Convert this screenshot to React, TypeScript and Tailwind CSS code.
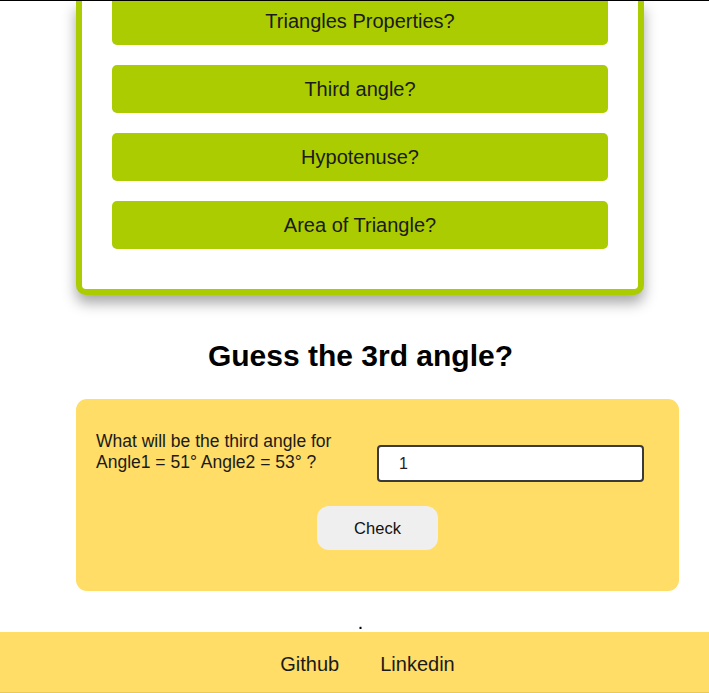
import React from 'react';

const topics = ['Triangles Properties?', 'Third angle?', 'Hypotenuse?', 'Area of Triangle?'];

export default function App() {
  return (
    <div className="min-h-[693px] bg-white font-['Liberation_Sans',Arial,sans-serif] text-black">
      <div className="h-px bg-black" />
      <div className="mx-[76px] w-[568px] rounded-b-[10px] border-x-[6px] border-b-[6px] border-[#aacc00] bg-white px-[30px] pb-[40px] shadow-[0_8px_14px_rgba(0,0,0,0.35)]">
        <div className="flex flex-col gap-[20px]">
          {topics.map((t, i) => (
            <button
              key={t}
              className={`flex w-full items-center justify-center rounded-[5px] bg-[#aacc00] text-[20px] text-[#1a1a1a] ${i === 0 ? 'h-[44px] rounded-t-none pb-[4px]' : 'h-[48px]'}`}
            >
              {t}
            </button>
          ))}
        </div>
      </div>

      <h2 className="mt-[45px] pl-[12px] text-center text-[30px] font-bold leading-[32px]">Guess the 3rd angle?</h2>

      <div className="mx-[76px] mt-[27px] flex h-[192px] w-[603px] flex-col items-center rounded-[11px] bg-[#ffdd66] px-[20px] pt-[32px]">
        <div className="flex w-full items-start justify-between pr-[15px]">
          <p className="w-[270px] text-[17.5px] leading-[21px] text-[#1a1a1a]">
            What will be the third angle for Angle1 = 51° Angle2 = 53° ?
          </p>
          <input
            readOnly
            value="1"
            className="mt-[14px] h-[37px] w-[267px] rounded-[4px] border-2 border-[#3a3a3a] bg-white px-[20px] text-[16px] text-[#222] outline-none"
          />
        </div>
        <button className="mt-[24px] h-[44px] w-[121px] rounded-[12px] bg-[#efefef] text-[16.5px] text-[#111]">Check</button>
      </div>

      <div className="mt-[25px] pl-[12px] text-center text-[14px] font-bold leading-[16px]">.</div>

      <footer className="flex h-[62px] items-center justify-center gap-[41px] border-b-2 border-[#e8c95a] bg-[#ffdd66] pt-[4px] pl-[26px] text-[20px] text-[#1a1a1a]">
        <a href="#">Github</a>
        <a href="#">Linkedin</a>
      </footer>
    </div>
  );
}
